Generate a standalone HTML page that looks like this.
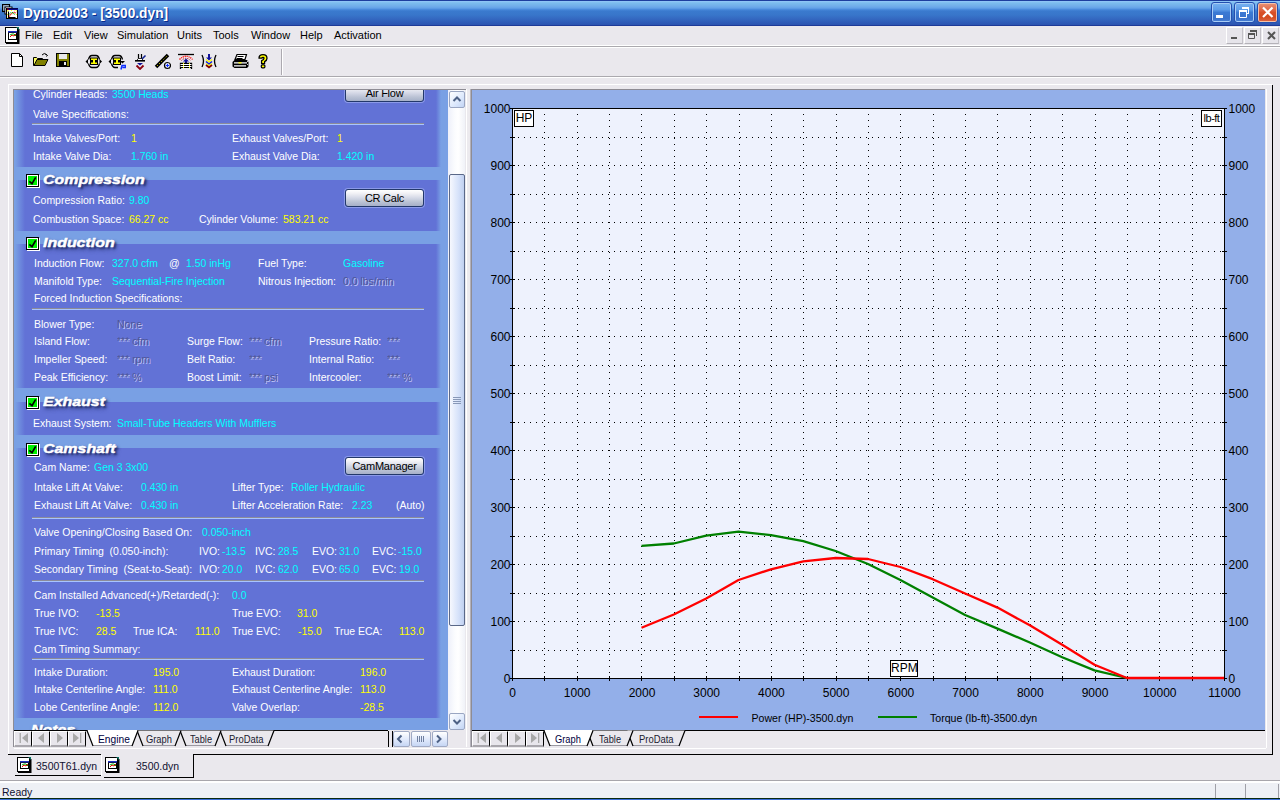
<!DOCTYPE html><html><head><meta charset="utf-8"><style>
*{margin:0;padding:0;box-sizing:border-box}
html,body{width:1280px;height:800px;overflow:hidden;background:#EAE8ED;font-family:"Liberation Sans",sans-serif}
.a{position:absolute}
.t{position:absolute;white-space:pre;font-size:11px;line-height:13px}
.p{font-size:11.5px;transform:scaleX(.91);transform-origin:0 0}
.w{color:#fff} .c{color:#00FFFF} .y{color:#FFFF00} .k{color:#000}
.d{color:#4E5598;text-shadow:1px 1px 0 #C4C8F6}
.hdr{position:absolute;white-space:pre;font:italic bold 13.5px/18px "Liberation Sans",sans-serif;color:#fff;-webkit-text-stroke:0.45px #fff;text-shadow:2px 2px 2px rgba(20,30,80,.8),1px 3px 4px rgba(20,30,80,.5);transform:scaleX(1.18);transform-origin:0 0}
.btn{position:absolute;border:1px solid #23386A;border-radius:3px;box-shadow:0 0 0 1px rgba(190,205,255,.45);background:linear-gradient(#FFFFFF 0%,#F2F2F6 20%,#D4D8E6 50%,#BAC2D4 75%,#A6B0C8 100%);font-size:11px;letter-spacing:-0.25px;line-height:16px;text-align:center;color:#000}
.cb{position:absolute;width:13px;height:13px;border:1px solid #000;background:#00F000;box-shadow:1px 1px 0 #fff, inset 0 0 0 1px #fff}
.sep{position:absolute;height:2px;border-top:1px solid #8C8C98;border-bottom:1px solid #A8C4FF}
</style></head><body>
<div class="a" style="left:0px;top:0px;width:1280px;height:26px;background:linear-gradient(#1E3E9E 0px,#1E3E9E 1px,#94C8F8 1px,#7CBCEE 3px,#72AEEA 6px,#64A2E8 8px,#4A8ADC 9.5px,#3A7ACE 11px,#3876CA 15px,#3468C0 19px,#2E5AB6 23px,#2C54B0 25px,#1E3A98 25px)"></div>
<svg class="a" style="left:2px;top:4px" width="17" height="16" viewBox="0 0 17 16">
<rect x="0.5" y="0.5" width="7" height="7" fill="none" stroke="#000" stroke-width="1.2"/><path d="M1.8 6.5V1.8H6.5" fill="none" stroke="#B8B0B0"/>
<rect x="2.5" y="2.5" width="8" height="8" fill="#000"/><path d="M3.8 9.5V3.8H9.5" fill="none" stroke="#E0DCD8"/>
<rect x="4" y="4" width="12" height="11" fill="#000"/><rect x="5" y="6" width="10" height="8" fill="#fff"/>
<rect x="5" y="4.5" width="11" height="1.5" fill="#0A0A90"/><rect x="5" y="4.5" width="1.5" height="1.5" fill="#900"/>
<path d="M5.5 6.5h9.5M5.5 13.5h9.5M5.5 6.5v7M14.5 6.5v7" stroke="#ffff00" stroke-width="0.9" stroke-dasharray="1 2.5"/>
<path d="M6.5 7.5v6h7" fill="none" stroke="#000" stroke-width="1.1"/>
<path d="M7.3 12.5L9 10.3 10.5 9.2 11.5 8.3 13.3 8.3 14.2 9.5" fill="none" stroke="#f00" stroke-width="1.1" stroke-dasharray="1 0.6"/>
<path d="M7.5 10.3L8.8 8.8 10.5 8.6 12 9.6 12.8 10.8" fill="none" stroke="#0A0" stroke-width="1.1" stroke-dasharray="1 0.6"/>
</svg>
<span class="a" style="left:23px;top:4px;font:bold 14.4px/18px 'Liberation Sans',sans-serif;color:#fff;text-shadow:1px 1px 0 #0A2A8C;white-space:pre;transform:scaleX(.955);transform-origin:0 0">Dyno2003 - [3500.dyn]</span>
<div class="a" style="left:1211px;top:2px;width:21px;height:21px;border:1px solid #2450B0;border-radius:3px;background:linear-gradient(#7AB4F0,#5E9CE8 35%,#3C7AD4 50%,#3A72CC 80%,#4A80D4);box-shadow:inset 0 0 0 1px #A8CCF6"></div>
<div class="a" style="left:1234px;top:2px;width:21px;height:21px;border:1px solid #2450B0;border-radius:3px;background:linear-gradient(#7AB4F0,#5E9CE8 35%,#3C7AD4 50%,#3A72CC 80%,#4A80D4);box-shadow:inset 0 0 0 1px #A8CCF6"></div>
<div class="a" style="left:1257px;top:2px;width:21px;height:21px;border:1px solid #2450B0;border-radius:3px;background:linear-gradient(#E89478,#E07050 30%,#D85028 50%,#D44C20 75%,#DC6848);box-shadow:inset 0 0 0 1px #F4C0A8"></div>
<div class="a" style="left:1216px;top:15px;width:7px;height:3px;background:#fff"></div>
<svg class="a" style="left:1234px;top:0px" width="21" height="24"><path d="M5.5 11v6.5h7v-6.5z" fill="none" stroke="#fff" stroke-width="1"/><rect x="5" y="10" width="8" height="2" fill="#fff"/><rect x="8" y="7" width="7" height="2" fill="#fff"/><rect x="14" y="7" width="1" height="7" fill="#fff"/><rect x="13" y="13" width="2" height="1" fill="#fff"/></svg>
<svg class="a" style="left:1257px;top:0px" width="21" height="24"><path d="M6 7.5l9.5 9.5M15.5 7.5l-9.5 9.5" stroke="#fff" stroke-width="2.2"/></svg>
<svg class="a" style="left:5px;top:27px" width="15" height="17" viewBox="0 0 15 17">
<rect x="0.5" y="0.5" width="12" height="15" fill="#fff" stroke="#000"/>
<rect x="1" y="15" width="13" height="2" fill="#000"/><rect x="13" y="2" width="1.5" height="15" fill="#000"/>
<path d="M11 0h3v3z" fill="#0a7060"/>
<rect x="3" y="4" width="9" height="9" fill="#000"/><rect x="4" y="6" width="7" height="6" fill="#fff"/><rect x="3" y="4" width="9" height="1.5" fill="#2030c0"/>
<polyline points="5,10 7,8 9,9 11,7" fill="none" stroke="#e00"/><polyline points="5,8 7,7 9,7 11,9" fill="none" stroke="#0a0"/>
</svg>
<span class="t k" style="left:25px;top:28.9px;">File</span>
<span class="t k" style="left:53px;top:28.9px;">Edit</span>
<span class="t k" style="left:84px;top:28.9px;">View</span>
<span class="t k" style="left:117px;top:28.9px;">Simulation</span>
<span class="t k" style="left:177px;top:28.9px;">Units</span>
<span class="t k" style="left:213px;top:28.9px;">Tools</span>
<span class="t k" style="left:251px;top:28.9px;">Window</span>
<span class="t k" style="left:300px;top:28.9px;">Help</span>
<span class="t k" style="left:334px;top:28.9px;">Activation</span>
<div class="a" style="left:1226px;top:27px;width:17px;height:17px;background:#E6E4EA;border-left:1px solid #fff;border-top:1px solid #fff;border-right:1px solid #C4C2C8;border-bottom:1px solid #B4B2B8"></div>
<div class="a" style="left:1244px;top:27px;width:17px;height:17px;background:#E6E4EA;border-left:1px solid #fff;border-top:1px solid #fff;border-right:1px solid #C4C2C8;border-bottom:1px solid #B4B2B8"></div>
<div class="a" style="left:1262px;top:27px;width:17px;height:17px;background:#E6E4EA;border-left:1px solid #fff;border-top:1px solid #fff;border-right:1px solid #C4C2C8;border-bottom:1px solid #B4B2B8"></div>
<div class="a" style="left:1231px;top:37px;width:6px;height:2px;background:#555"></div>
<svg class="a" style="left:1244px;top:27px" width="17" height="17"><path d="M4.5 7v4.5h6V7" fill="none" stroke="#555" stroke-width="1"/><rect x="4" y="6" width="7" height="2" fill="#555"/><rect x="6" y="3" width="7" height="2" fill="#555"/><rect x="12" y="3" width="1" height="6" fill="#555"/></svg>
<svg class="a" style="left:1267px;top:31px" width="9" height="9"><path d="M1 1l7 7M8 1l-7 7" stroke="#555" stroke-width="2"/></svg>
<div class="a" style="left:0px;top:45px;width:1280px;height:1px;background:#fff"></div>
<div class="a" style="left:0px;top:46px;width:1280px;height:1px;background:#ABA9AE"></div>
<div class="a" style="left:0px;top:47px;width:1280px;height:1px;background:#fff"></div>

<svg class="a" style="left:10px;top:52px" width="14" height="16"><path d="M1.5 1.5h8l3 3v10h-11z" fill="#fff" stroke="#000"/><path d="M9.5 1.5v3h3" fill="none" stroke="#000"/></svg>
<svg class="a" style="left:32px;top:52px" width="17" height="15"><path d="M1.5 5.5h3l1 1h5v7h-9z" fill="#ffff60" stroke="#000"/><path d="M2 13.5l3-6h11l-3 6z" fill="#808000" stroke="#000"/><path d="M10 3q2-3 5 0" fill="none" stroke="#000"/><path d="M13.5 2l2 1.5-1 1" fill="none" stroke="#000"/></svg>
<svg class="a" style="left:56px;top:53px" width="14" height="14"><rect x="0.5" y="0.5" width="13" height="13" fill="#808000" stroke="#000"/><rect x="3" y="1" width="8" height="5" fill="#e8e8e8"/><rect x="3" y="8" width="8" height="6" fill="#000"/><rect x="8" y="9" width="2" height="3" fill="#e8e8e8"/></svg>
<svg class="a" style="left:85px;top:54px" width="18" height="15"><path d="M3.5 5.5Q4.5 1.5 7 1.5H11Q13.5 1.5 14.5 5.5M3.5 9.5Q4.5 13.5 7 13.5H11Q13.5 13.5 14.5 9.5" fill="none" stroke="#000" stroke-width="1.3"/><path d="M0.5 7.5l2.5-2.5v5z M17 7.5l-2.5-2.5v5z" fill="#000"/><rect x="5" y="3.5" width="8" height="7.5" fill="#000"/><path d="M6 4.5h6v1.6h-2v2.3h2v1.6h-6v-1.6h2v-2.3h-2z" fill="#ffff00"/></svg>
<svg class="a" style="left:108px;top:54px" width="18" height="16"><path d="M3.5 5.5Q4.5 1.5 7 1.5H11Q13.5 1.5 14.5 5.5M3.5 9.5Q4.5 13.5 7 13.5H10" fill="none" stroke="#000" stroke-width="1.3"/><path d="M0.5 7.5l2.5-2.5v5z M14.5 9.5l-2.5-2.5h5z" fill="#000"/><rect x="5" y="3.5" width="8" height="7.5" fill="#000"/><path d="M6 4.5h6v1.6h-2v2.3h2v1.6h-6v-1.6h2v-2.3h-2z" fill="#ffff00"/><path d="M13 15.5l1-4h3.5v2h-3" fill="none" stroke="#1030ff" stroke-width="1.5"/></svg>
<svg class="a" style="left:134px;top:53px" width="13" height="17"><path d="M4.5 1v6M7.5 1v6" stroke="#000" stroke-width="1.2"/><path d="M7.5 6.5l4-4" stroke="#102090" stroke-width="1.6"/><path d="M1 7.8h10" stroke="#000" stroke-width="1.6"/><path d="M3 7l1.5-1.5h3L9 7" fill="#fff" stroke="#000" stroke-width="0.8"/><path d="M3 10h6l-3 2.5z" fill="#10109a"/><path d="M2.5 12.5l3.5 3.5 3.5-3.5" fill="none" stroke="#8a0010" stroke-width="1.8"/></svg>
<svg class="a" style="left:154px;top:53px" width="17" height="17"><path d="M2 14L14 2" stroke="#000" stroke-width="3.6"/><path d="M3 13L13 3" stroke="#ffff00" stroke-width="1" stroke-dasharray="1 2.1"/><circle cx="13.5" cy="12.5" r="3" fill="#fff" stroke="#000" stroke-width="1.2"/><path d="M13.5 10.7v3.6M11.7 12.5h3.6" stroke="#1030ff" stroke-width="1.2"/></svg>
<svg class="a" style="left:177px;top:53px" width="18" height="17"><path d="M1 1.5h16" stroke="#000" stroke-width="1.3"/><path d="M2.5 6.5Q9 0 15.5 6.5" fill="none" stroke="#f00" stroke-width="1.3" stroke-dasharray="1.2 0.8"/><path d="M4.5 7.5Q9 3 13.5 7.5" fill="none" stroke="#a00" stroke-width="1" stroke-dasharray="1 1"/><path d="M9 5.5l-3 3h6z" fill="#10109a"/><path d="M9 8v2" stroke="#10109a" stroke-width="2"/><path d="M3.5 16V10.5h11V16" fill="none" stroke="#000" stroke-width="1.3"/><path d="M3.5 10.5h11M3.5 12.5h11M3.5 14.5h11" stroke="#000" stroke-width="1"/><path d="M3.5 11.5h11M3.5 13.5h11" stroke="#fff" stroke-width="1"/><path d="M6.5 10v6M12.5 10v6" stroke="#ffff00" stroke-width="1" stroke-dasharray="1 1"/></svg>
<svg class="a" style="left:201px;top:53px" width="16" height="16"><path d="M1 2q3 6 0 12M15 2q-3 6 0 12" fill="none" stroke="#000" stroke-width="1.3"/><path d="M8 1v4" stroke="#10109a" stroke-width="2"/><path d="M5 4.5h6l-3 3z" fill="#10109a"/><path d="M5 6.5l3 2.5 3-2.5" fill="none" stroke="#ffff00" stroke-width="1.3"/><path d="M5 8.5l3 2.5 3-2.5" fill="none" stroke="#1020e0" stroke-width="1.6"/><path d="M5 10.5l3 2.5 3-2.5" fill="none" stroke="#ffff00" stroke-width="1.3"/><path d="M5 12l3 2.5 3-2.5" fill="none" stroke="#800000" stroke-width="1.7"/></svg>
<svg class="a" style="left:231px;top:53px" width="18" height="16"><path d="M6 1.5h9.5l-1.5 5h-10z" fill="#fff" stroke="#000" stroke-width="1.2"/><path d="M6.5 3.5h6M5.5 5.5h6" stroke="#000" stroke-width="1"/><path d="M3.5 7h12.5l1.5 2v4.5l-1.5 1.5h-12.5l-2-1.5v-4.5z" fill="#000"/><path d="M3 9.8h13M3 12.8h12" stroke="#fff" stroke-width="1.3"/><path d="M7.5 9.8h3" stroke="#ffff00" stroke-width="1.3"/><path d="M16 8l1 1M16 11l1 1" stroke="#fff" stroke-width="0.8"/></svg>
<svg class="a" style="left:257px;top:53px" width="12" height="16"><path d="M2 5.2Q2 1.6 6 1.6T10 5.2Q10 7.4 7.6 8.6V10.6H4.6V7.6Q7 6.6 7 5.2 7 4.4 6 4.4T5 5.2z" fill="#ffff00" stroke="#000" stroke-width="1.3" stroke-linejoin="round"/><rect x="4.3" y="11.8" width="3.6" height="3" rx="1" fill="#ffff00" stroke="#000" stroke-width="1.2"/></svg>

<div class="a" style="left:281px;top:49px;width:1px;height:26px;background:#ACA9B0"></div>
<div class="a" style="left:282px;top:49px;width:1px;height:26px;background:#fff"></div>
<div class="a" style="left:0px;top:76px;width:1280px;height:1px;background:#ABA9AE"></div>
<div class="a" style="left:0px;top:77px;width:1280px;height:1px;background:#fff"></div>
<div class="a" style="left:8px;top:84px;width:1264px;height:1px;background:#fff"></div>
<div class="a" style="left:8px;top:84px;width:1px;height:670px;background:#fff"></div>
<div class="a" style="left:1272px;top:85px;width:1px;height:670px;background:#000"></div>
<div class="a" style="left:13px;top:89px;width:453px;height:1px;background:#8E8C94"></div>
<div class="a" style="left:13px;top:89px;width:1px;height:658px;background:#8E8C94"></div>
<div class="a" style="left:471px;top:89px;width:794px;height:1px;background:#8E8C94"></div>
<div class="a" style="left:471px;top:89px;width:1px;height:658px;background:#8E8C94"></div>
<div class="a" style="left:466px;top:89px;width:1px;height:658px;background:#FFFFFF"></div>
<div class="a" style="left:467px;top:89px;width:3px;height:658px;background:#ECEAEE"></div>
<div class="a" style="left:470px;top:89px;width:1px;height:658px;background:#B4B2BA"></div>
<div class="a" style="left:1266px;top:89px;width:1px;height:659px;background:#fff"></div>
<div class="a" style="left:14px;top:748px;width:1252px;height:1px;background:#fff"></div>
<div class="a" style="left:14px;top:90px;width:434px;height:640px;overflow:hidden;background:#79A0E4">
<div class="a" style="left:0px;top:-30px;width:434px;height:107px;background:linear-gradient(to right,#79A0E4 1px,#6272D6 11px,#6272D6 422px,#79A0E4 427px,#79A0E4 434px)"></div>
<div class="a" style="left:0px;top:90px;width:434px;height:51px;background:linear-gradient(to right,#79A0E4 1px,#6272D6 11px,#6272D6 422px,#79A0E4 427px,#79A0E4 434px)"></div>
<div class="a" style="left:0px;top:154px;width:434px;height:144px;background:linear-gradient(to right,#79A0E4 1px,#6272D6 11px,#6272D6 422px,#79A0E4 427px,#79A0E4 434px)"></div>
<div class="a" style="left:0px;top:312px;width:434px;height:33px;background:linear-gradient(to right,#79A0E4 1px,#6272D6 11px,#6272D6 422px,#79A0E4 427px,#79A0E4 434px)"></div>
<div class="a" style="left:0px;top:358px;width:434px;height:270px;background:linear-gradient(to right,#79A0E4 1px,#6272D6 11px,#6272D6 422px,#79A0E4 427px,#79A0E4 434px)"></div>
</div>
<div class="a" style="left:0;top:90px;width:448px;height:640px;overflow:hidden">
<span class="t p w" style="left:33px;top:-2.5px">Cylinder Heads:</span>
<span class="t p c" style="left:112px;top:-2.5px">3500 Heads</span>
<div class="btn" style="left:345px;top:-6px;width:79px;height:18px;line-height:16px">Air Flow</div>
<span class="t p w" style="left:33px;top:17.5px">Valve Specifications:</span>
<div class="sep" style="left:32px;top:33px;width:392px"></div>
<span class="t p w" style="left:33px;top:41.5px">Intake Valves/Port:</span>
<span class="t p y" style="left:131px;top:41.5px">1</span>
<span class="t p w" style="left:232px;top:41.5px">Exhaust Valves/Port:</span>
<span class="t p y" style="left:337px;top:41.5px">1</span>
<span class="t p w" style="left:33px;top:59.5px">Intake Valve Dia:</span>
<span class="t p c" style="left:131px;top:59.5px">1.760 in</span>
<span class="t p w" style="left:232px;top:59.5px">Exhaust Valve Dia:</span>
<span class="t p c" style="left:337px;top:59.5px">1.420 in</span>
<div class="cb" style="left:26px;top:84px"></div>
<svg class="a" style="left:26px;top:84px" width="13" height="13"><path d="M3.3 7.3L6 9.6 9.7 3.4" fill="none" stroke="#000" stroke-width="1.7"/></svg>
<span class="hdr" style="left:43px;top:80.7px">Compression</span>
<div class="btn" style="left:345px;top:99px;width:79px;height:18px;line-height:16px">CR Calc</div>
<span class="t p w" style="left:33px;top:103.5px">Compression Ratio:</span>
<span class="t p c" style="left:129px;top:103.5px">9.80</span>
<span class="t p w" style="left:33px;top:122.5px">Combustion Space:</span>
<span class="t p y" style="left:129px;top:122.5px">66.27 cc</span>
<span class="t p w" style="left:199px;top:122.5px">Cylinder Volume:</span>
<span class="t p y" style="left:283px;top:122.5px">583.21 cc</span>
<div class="cb" style="left:26px;top:147px"></div>
<svg class="a" style="left:26px;top:147px" width="13" height="13"><path d="M3.3 7.3L6 9.6 9.7 3.4" fill="none" stroke="#000" stroke-width="1.7"/></svg>
<span class="hdr" style="left:43px;top:143.7px">Induction</span>
<span class="t p w" style="left:33.5px;top:166.5px">Induction Flow:</span>
<span class="t p c" style="left:112px;top:166.5px">327.0 cfm</span>
<span class="t p w" style="left:168.5px;top:166.5px">@</span>
<span class="t p c" style="left:186px;top:166.5px">1.50 inHg</span>
<span class="t p w" style="left:257.5px;top:166.5px">Fuel Type:</span>
<span class="t p c" style="left:342.5px;top:166.5px">Gasoline</span>
<span class="t p w" style="left:33.5px;top:184.5px">Manifold Type:</span>
<span class="t p c" style="left:112px;top:184.5px">Sequential-Fire Injection</span>
<span class="t p w" style="left:257.5px;top:184.5px">Nitrous Injection:</span>
<span class="t p d" style="left:343px;top:184.5px">0.0 lbs/min</span>
<span class="t p w" style="left:33.5px;top:201.5px">Forced Induction Specifications:</span>
<div class="sep" style="left:32px;top:218px;width:392px"></div>
<span class="t p w" style="left:33.5px;top:227.5px">Blower Type:</span>
<span class="t p d" style="left:117px;top:227.5px">None</span>
<span class="t p w" style="left:33.5px;top:244.5px">Island Flow:</span>
<span class="t p d" style="left:117px;top:244.5px">*** cfm</span>
<span class="t p w" style="left:186.5px;top:244.5px">Surge Flow:</span>
<span class="t p d" style="left:249px;top:244.5px">*** cfm</span>
<span class="t p w" style="left:308.5px;top:244.5px">Pressure Ratio:</span>
<span class="t p d" style="left:387px;top:244.5px">***</span>
<span class="t p w" style="left:33.5px;top:262.5px">Impeller Speed:</span>
<span class="t p d" style="left:117px;top:262.5px">*** rpm</span>
<span class="t p w" style="left:186.5px;top:262.5px">Belt Ratio:</span>
<span class="t p d" style="left:249px;top:262.5px">***</span>
<span class="t p w" style="left:308.5px;top:262.5px">Internal Ratio:</span>
<span class="t p d" style="left:387px;top:262.5px">***</span>
<span class="t p w" style="left:33.5px;top:280.5px">Peak Efficiency:</span>
<span class="t p d" style="left:117px;top:280.5px">*** %</span>
<span class="t p w" style="left:186.5px;top:280.5px">Boost Limit:</span>
<span class="t p d" style="left:249px;top:280.5px">*** psi</span>
<span class="t p w" style="left:308.5px;top:280.5px">Intercooler:</span>
<span class="t p d" style="left:387px;top:280.5px">*** %</span>
<div class="cb" style="left:26px;top:306px"></div>
<svg class="a" style="left:26px;top:306px" width="13" height="13"><path d="M3.3 7.3L6 9.6 9.7 3.4" fill="none" stroke="#000" stroke-width="1.7"/></svg>
<span class="hdr" style="left:43px;top:302.7px">Exhaust</span>
<span class="t p w" style="left:33px;top:326.5px">Exhaust System:</span>
<span class="t p c" style="left:116.5px;top:326.5px">Small-Tube Headers With Mufflers</span>
<div class="cb" style="left:26px;top:353px"></div>
<svg class="a" style="left:26px;top:353px" width="13" height="13"><path d="M3.3 7.3L6 9.6 9.7 3.4" fill="none" stroke="#000" stroke-width="1.7"/></svg>
<span class="hdr" style="left:43px;top:349.7px">Camshaft</span>
<div class="btn" style="left:345px;top:367px;width:79px;height:18px;line-height:16px">CamManager</div>
<span class="t p w" style="left:33.5px;top:370.5px">Cam Name:</span>
<span class="t p c" style="left:93.5px;top:370.5px">Gen 3 3x00</span>
<span class="t p w" style="left:33.5px;top:390.5px">Intake Lift At Valve:</span>
<span class="t p c" style="left:140.5px;top:390.5px">0.430 in</span>
<span class="t p w" style="left:231.5px;top:390.5px">Lifter Type:</span>
<span class="t p c" style="left:290.5px;top:390.5px">Roller Hydraulic</span>
<span class="t p w" style="left:33.5px;top:409.0px">Exhaust Lift At Valve:</span>
<span class="t p c" style="left:140.5px;top:409.0px">0.430 in</span>
<span class="t p w" style="left:231.5px;top:409.0px">Lifter Acceleration Rate:</span>
<span class="t p c" style="left:352px;top:409.0px">2.23</span>
<span class="t p w" style="left:395.5px;top:409.0px">(Auto)</span>
<div class="sep" style="left:32px;top:427px;width:392px"></div>
<span class="t p w" style="left:33.5px;top:435.5px">Valve Opening/Closing Based On:</span>
<span class="t p c" style="left:201.5px;top:435.5px">0.050-inch</span>
<span class="t p w" style="left:33.5px;top:454.5px">Primary Timing  (0.050-inch):</span>
<span class="t p w" style="left:198.5px;top:454.5px">IVO:</span>
<span class="t p c" style="left:222px;top:454.5px">-13.5</span>
<span class="t p w" style="left:255px;top:454.5px">IVC:</span>
<span class="t p c" style="left:278px;top:454.5px">28.5</span>
<span class="t p w" style="left:311.5px;top:454.5px">EVO:</span>
<span class="t p c" style="left:339px;top:454.5px">31.0</span>
<span class="t p w" style="left:372px;top:454.5px">EVC:</span>
<span class="t p c" style="left:398px;top:454.5px">-15.0</span>
<span class="t p w" style="left:33.5px;top:472.5px">Secondary Timing  (Seat-to-Seat):</span>
<span class="t p w" style="left:198.5px;top:472.5px">IVO:</span>
<span class="t p c" style="left:222px;top:472.5px">20.0</span>
<span class="t p w" style="left:255px;top:472.5px">IVC:</span>
<span class="t p c" style="left:278px;top:472.5px">62.0</span>
<span class="t p w" style="left:311.5px;top:472.5px">EVO:</span>
<span class="t p c" style="left:339px;top:472.5px">65.0</span>
<span class="t p w" style="left:372px;top:472.5px">EVC:</span>
<span class="t p c" style="left:398.5px;top:472.5px">19.0</span>
<div class="sep" style="left:32px;top:490px;width:392px"></div>
<span class="t p w" style="left:33.5px;top:498.5px">Cam Installed Advanced(+)/Retarded(-):</span>
<span class="t p c" style="left:231.5px;top:498.5px">0.0</span>
<span class="t p w" style="left:33.5px;top:516.5px">True IVO:</span>
<span class="t p y" style="left:95.5px;top:516.5px">-13.5</span>
<span class="t p w" style="left:231.5px;top:516.5px">True EVO:</span>
<span class="t p y" style="left:297px;top:516.5px">31.0</span>
<span class="t p w" style="left:33.5px;top:534.5px">True IVC:</span>
<span class="t p y" style="left:95.5px;top:534.5px">28.5</span>
<span class="t p w" style="left:133px;top:534.5px">True ICA:</span>
<span class="t p y" style="left:194.5px;top:534.5px">111.0</span>
<span class="t p w" style="left:231.5px;top:534.5px">True EVC:</span>
<span class="t p y" style="left:297.5px;top:534.5px">-15.0</span>
<span class="t p w" style="left:333.5px;top:534.5px">True ECA:</span>
<span class="t p y" style="left:398.5px;top:534.5px">113.0</span>
<span class="t p w" style="left:33.5px;top:552.5px">Cam Timing Summary:</span>
<div class="sep" style="left:32px;top:568px;width:392px"></div>
<span class="t p w" style="left:33.5px;top:575.5px">Intake Duration:</span>
<span class="t p y" style="left:153px;top:575.5px">195.0</span>
<span class="t p w" style="left:231.5px;top:575.5px">Exhaust Duration:</span>
<span class="t p y" style="left:360px;top:575.5px">196.0</span>
<span class="t p w" style="left:33.5px;top:592.5px">Intake Centerline Angle:</span>
<span class="t p y" style="left:153px;top:592.5px">111.0</span>
<span class="t p w" style="left:231.5px;top:592.5px">Exhaust Centerline Angle:</span>
<span class="t p y" style="left:360px;top:592.5px">113.0</span>
<span class="t p w" style="left:33.5px;top:610.5px">Lobe Centerline Angle:</span>
<span class="t p y" style="left:153px;top:610.5px">112.0</span>
<span class="t p w" style="left:231.5px;top:610.5px">Valve Overlap:</span>
<span class="t p y" style="left:360px;top:610.5px">-28.5</span>
<span class="hdr" style="left:31px;top:631.4px">Notes</span>
</div>
<div class="a" style="left:448px;top:90px;width:17px;height:640px;background:linear-gradient(to right,#EEF0FA,#FBFCFE 40%,#FFFFFF 60%,#F0F2F8)"></div>
<div class="a" style="left:449px;top:91px;width:16px;height:17px;border:1px solid #9AA6C2;border-radius:2px;background:linear-gradient(135deg,#FFFFFF,#DCE8FC 60%,#C2D4F4)"></div>
<svg class="a" style="left:452px;top:95px" width="10" height="8"><path d="M1.5 6l3.5-3.5 3.5 3.5" fill="none" stroke="#4D6185" stroke-width="2"/></svg>
<div class="a" style="left:449px;top:713px;width:16px;height:17px;border:1px solid #9AA6C2;border-radius:2px;background:linear-gradient(135deg,#FFFFFF,#DCE8FC 60%,#C2D4F4)"></div>
<svg class="a" style="left:452px;top:718px" width="10" height="8"><path d="M1.5 2l3.5 3.5 3.5-3.5" fill="none" stroke="#4D6185" stroke-width="2"/></svg>
<div class="a" style="left:449px;top:174px;width:16px;height:452px;border:1px solid #5A6888;border-radius:2px;background:linear-gradient(to right,#F6F8FE,#D6E2FA 60%,#C0D0F0)"></div>
<svg class="a" style="left:453px;top:396px" width="8" height="8"><path d="M0 1.5h8M0 3.5h8M0 5.5h8M0 7.5h8" stroke="#8898B8"/></svg>
<div class="a" style="left:14px;top:730px;width:452px;height:17px;background:#EAE8ED"></div>
<div class="a" style="left:14px;top:730px;width:74px;height:1px;background:#000"></div>
<div class="a" style="left:14px;top:731px;width:18px;height:16px;background:#E8E6EC;border-left:1px solid #fff;border-top:1px solid #fff;border-right:1px solid #000;border-bottom:2px solid #A9A7AD"></div>
<div class="a" style="left:32px;top:731px;width:18px;height:16px;background:#E8E6EC;border-left:1px solid #fff;border-top:1px solid #fff;border-right:1px solid #000;border-bottom:2px solid #A9A7AD"></div>
<div class="a" style="left:50px;top:731px;width:18px;height:16px;background:#E8E6EC;border-left:1px solid #fff;border-top:1px solid #fff;border-right:1px solid #000;border-bottom:2px solid #A9A7AD"></div>
<div class="a" style="left:68px;top:731px;width:18px;height:16px;background:#E8E6EC;border-left:1px solid #fff;border-top:1px solid #fff;border-right:1px solid #000;border-bottom:2px solid #A9A7AD"></div>
<svg class="a" style="left:14px;top:731px" width="74" height="16">
<rect x="5.6" y="2" width="1.3" height="10" fill="#A8A8A8"/><path d="M14 2v10l-6-5z" fill="#A8A8A8"/>
<path d="M30 2v10l-6-5z" fill="#A8A8A8"/>
<path d="M43 2v10l6-5z" fill="#A8A8A8"/>
<path d="M59 2v10l6-5z" fill="#A8A8A8"/><rect x="66" y="2" width="1.3" height="10" fill="#A8A8A8"/>
</svg>
<svg class="a" style="left:0;top:730px" width="1280" height="17"><rect x="87" y="0" width="301" height="17" fill="#EAE8ED"/><path d="M87 0.5H388" stroke="#000"/><path d="M220 0.5L226 16H268L274 0.5" fill="#EAE8ED"/><path d="M226 15.5H268" stroke="#9A98A0" stroke-width="1"/><path d="M220 0.5L226 16M268 16L274 0.5" fill="none" stroke="#000" stroke-width="1.2"/><path d="M180 0.5L186 16H215L221 0.5" fill="#EAE8ED"/><path d="M186 15.5H215" stroke="#9A98A0" stroke-width="1"/><path d="M180 0.5L186 16M215 16L221 0.5" fill="none" stroke="#000" stroke-width="1.2"/><path d="M137 0.5L143 16H175L181 0.5" fill="#EAE8ED"/><path d="M143 15.5H175" stroke="#9A98A0" stroke-width="1"/><path d="M137 0.5L143 16M175 16L181 0.5" fill="none" stroke="#000" stroke-width="1.2"/><path d="M87 0.5L93 16H132L138 0.5" fill="#FFFFFF"/><path d="M93 15.5H132" stroke="#9A98A0" stroke-width="1"/><path d="M87 0.5L93 16M132 16L138 0.5" fill="none" stroke="#000" stroke-width="1.2"/><rect x="88" y="0" width="49" height="1.2" fill="#fff"/></svg>
<span class="t" style="left:97.5px;top:732.5px;color:#000040;font-size:11.5px;transform:scaleX(0.89);transform-origin:0 0">Engine</span>
<span class="t" style="left:145.5px;top:732.5px;color:#202030;font-size:11.5px;transform:scaleX(0.81);transform-origin:0 0">Graph</span>
<span class="t" style="left:189.5px;top:732.5px;color:#202030;font-size:11.5px;transform:scaleX(0.8);transform-origin:0 0">Table</span>
<span class="t" style="left:229px;top:732.5px;color:#202030;font-size:11.5px;transform:scaleX(0.82);transform-origin:0 0">ProData</span>
<div class="a" style="left:388px;top:731px;width:1px;height:16px;background:#000"></div>
<div class="a" style="left:392px;top:731px;width:1px;height:16px;background:#000"></div>
<div class="a" style="left:393px;top:731px;width:17px;height:16px;border:1px solid #A0AAC4;border-radius:2px;background:linear-gradient(#FFFFFF,#DDE7FB 60%,#C6D6F4)"></div>
<div class="a" style="left:411px;top:731px;width:20px;height:16px;border:1px solid #A0AAC4;border-radius:2px;background:linear-gradient(#FFFFFF,#DDE7FB 60%,#C6D6F4)"></div>
<div class="a" style="left:432px;top:731px;width:16px;height:16px;border:1px solid #A0AAC4;border-radius:2px;background:linear-gradient(#FFFFFF,#DDE7FB 60%,#C6D6F4)"></div>
<svg class="a" style="left:393px;top:731px" width="56" height="16"><path d="M8.5 4.5l-3.5 3.5 3.5 3.5" fill="none" stroke="#4D6185" stroke-width="2"/><path d="M24.5 5v6M26.5 5v6M28.5 5v6M30.5 5v6" stroke="#7080A0"/><path d="M44 4.5l3.5 3.5-3.5 3.5" fill="none" stroke="#4D6185" stroke-width="2"/></svg>
<div class="a" style="left:472px;top:730px;width:793px;height:17px;background:#EAE8ED"></div>
<div class="a" style="left:472px;top:730px;width:74px;height:1px;background:#000"></div>
<div class="a" style="left:472px;top:731px;width:18px;height:16px;background:#E8E6EC;border-left:1px solid #fff;border-top:1px solid #fff;border-right:1px solid #000;border-bottom:2px solid #A9A7AD"></div>
<div class="a" style="left:490px;top:731px;width:18px;height:16px;background:#E8E6EC;border-left:1px solid #fff;border-top:1px solid #fff;border-right:1px solid #000;border-bottom:2px solid #A9A7AD"></div>
<div class="a" style="left:508px;top:731px;width:18px;height:16px;background:#E8E6EC;border-left:1px solid #fff;border-top:1px solid #fff;border-right:1px solid #000;border-bottom:2px solid #A9A7AD"></div>
<div class="a" style="left:526px;top:731px;width:18px;height:16px;background:#E8E6EC;border-left:1px solid #fff;border-top:1px solid #fff;border-right:1px solid #000;border-bottom:2px solid #A9A7AD"></div>
<svg class="a" style="left:472px;top:731px" width="74" height="16">
<rect x="5.6" y="2" width="1.3" height="10" fill="#A8A8A8"/><path d="M14 2v10l-6-5z" fill="#A8A8A8"/>
<path d="M30 2v10l-6-5z" fill="#A8A8A8"/>
<path d="M43 2v10l6-5z" fill="#A8A8A8"/>
<path d="M59 2v10l6-5z" fill="#A8A8A8"/><rect x="66" y="2" width="1.3" height="10" fill="#A8A8A8"/>
</svg>
<svg class="a" style="left:0;top:730px" width="1280" height="17"><rect x="544" y="0" width="721" height="17" fill="#EAE8ED"/><path d="M544 0.5H1265" stroke="#000"/><path d="M627 0.5L633 16H679L685 0.5" fill="#EAE8ED"/><path d="M633 15.5H679" stroke="#9A98A0" stroke-width="1"/><path d="M627 0.5L633 16M679 16L685 0.5" fill="none" stroke="#000" stroke-width="1.2"/><path d="M587 0.5L593 16H627L633 0.5" fill="#EAE8ED"/><path d="M593 15.5H627" stroke="#9A98A0" stroke-width="1"/><path d="M587 0.5L593 16M627 16L633 0.5" fill="none" stroke="#000" stroke-width="1.2"/><path d="M544 0.5L550 16H587L593 0.5" fill="#FFFFFF"/><path d="M550 15.5H587" stroke="#9A98A0" stroke-width="1"/><path d="M544 0.5L550 16M587 16L593 0.5" fill="none" stroke="#000" stroke-width="1.2"/><rect x="545" y="0" width="47" height="1.2" fill="#fff"/></svg>
<span class="t" style="left:555px;top:732.5px;color:#000040;font-size:11.5px;transform:scaleX(0.81);transform-origin:0 0">Graph</span>
<span class="t" style="left:599px;top:732.5px;color:#202030;font-size:11.5px;transform:scaleX(0.8);transform-origin:0 0">Table</span>
<span class="t" style="left:639px;top:732.5px;color:#202030;font-size:11.5px;transform:scaleX(0.82);transform-origin:0 0">ProData</span>
<svg class="a" style="left:472px;top:90px" width="793" height="640" viewBox="472 90 793 640" shape-rendering="crispEdges"><rect x="472" y="90" width="793" height="640" fill="#93AFE9"/><rect x="512" y="108" width="712" height="570" fill="#EEF2FD"/><path d="M518 650.5H1224" stroke="#000" stroke-dasharray="1 5"/><path d="M518 621.5H1224" stroke="#000" stroke-dasharray="1 5"/><path d="M518 593.5H1224" stroke="#000" stroke-dasharray="1 5"/><path d="M518 564.5H1224" stroke="#000" stroke-dasharray="1 5"/><path d="M518 536.5H1224" stroke="#000" stroke-dasharray="1 5"/><path d="M518 507.5H1224" stroke="#000" stroke-dasharray="1 5"/><path d="M518 479.5H1224" stroke="#000" stroke-dasharray="1 5"/><path d="M518 450.5H1224" stroke="#000" stroke-dasharray="1 5"/><path d="M518 422.5H1224" stroke="#000" stroke-dasharray="1 5"/><path d="M518 393.5H1224" stroke="#000" stroke-dasharray="1 5"/><path d="M518 365.5H1224" stroke="#000" stroke-dasharray="1 5"/><path d="M518 336.5H1224" stroke="#000" stroke-dasharray="1 5"/><path d="M518 308.5H1224" stroke="#000" stroke-dasharray="1 5"/><path d="M518 279.5H1224" stroke="#000" stroke-dasharray="1 5"/><path d="M518 251.5H1224" stroke="#000" stroke-dasharray="1 5"/><path d="M518 222.5H1224" stroke="#000" stroke-dasharray="1 5"/><path d="M518 194.5H1224" stroke="#000" stroke-dasharray="1 5"/><path d="M518 165.5H1224" stroke="#000" stroke-dasharray="1 5"/><path d="M518 137.5H1224" stroke="#000" stroke-dasharray="1 5"/><path d="M544.5 673V108" stroke="#000" stroke-dasharray="1 5"/><path d="M577.5 673V108" stroke="#000" stroke-dasharray="1 5"/><path d="M609.5 673V108" stroke="#000" stroke-dasharray="1 5"/><path d="M641.5 673V108" stroke="#000" stroke-dasharray="1 5"/><path d="M674.5 673V108" stroke="#000" stroke-dasharray="1 5"/><path d="M706.5 673V108" stroke="#000" stroke-dasharray="1 5"/><path d="M739.5 673V108" stroke="#000" stroke-dasharray="1 5"/><path d="M771.5 673V108" stroke="#000" stroke-dasharray="1 5"/><path d="M803.5 673V108" stroke="#000" stroke-dasharray="1 5"/><path d="M836.5 673V108" stroke="#000" stroke-dasharray="1 5"/><path d="M868.5 673V108" stroke="#000" stroke-dasharray="1 5"/><path d="M900.5 673V108" stroke="#000" stroke-dasharray="1 5"/><path d="M933.5 673V108" stroke="#000" stroke-dasharray="1 5"/><path d="M965.5 673V108" stroke="#000" stroke-dasharray="1 5"/><path d="M997.5 673V108" stroke="#000" stroke-dasharray="1 5"/><path d="M1030.5 673V108" stroke="#000" stroke-dasharray="1 5"/><path d="M1062.5 673V108" stroke="#000" stroke-dasharray="1 5"/><path d="M1095.5 673V108" stroke="#000" stroke-dasharray="1 5"/><path d="M1127.5 673V108" stroke="#000" stroke-dasharray="1 5"/><path d="M1159.5 673V108" stroke="#000" stroke-dasharray="1 5"/><path d="M1192.5 673V108" stroke="#000" stroke-dasharray="1 5"/><path d="M512 108.5H1225" stroke="#000" stroke-width="1"/><path d="M510 678.5H1227" stroke="#000" stroke-width="1"/><path d="M512.5 108V681" stroke="#000" stroke-width="1"/><path d="M1224.5 108V681" stroke="#000" stroke-width="1"/><path d="M510 678.5H515M1222 678.5H1227" stroke="#000" stroke-width="1"/><path d="M510 650.5H515M1222 650.5H1227" stroke="#000" stroke-width="1"/><path d="M510 621.5H515M1222 621.5H1227" stroke="#000" stroke-width="1"/><path d="M510 593.5H515M1222 593.5H1227" stroke="#000" stroke-width="1"/><path d="M510 564.5H515M1222 564.5H1227" stroke="#000" stroke-width="1"/><path d="M510 536.5H515M1222 536.5H1227" stroke="#000" stroke-width="1"/><path d="M510 507.5H515M1222 507.5H1227" stroke="#000" stroke-width="1"/><path d="M510 479.5H515M1222 479.5H1227" stroke="#000" stroke-width="1"/><path d="M510 450.5H515M1222 450.5H1227" stroke="#000" stroke-width="1"/><path d="M510 422.5H515M1222 422.5H1227" stroke="#000" stroke-width="1"/><path d="M510 393.5H515M1222 393.5H1227" stroke="#000" stroke-width="1"/><path d="M510 365.5H515M1222 365.5H1227" stroke="#000" stroke-width="1"/><path d="M510 336.5H515M1222 336.5H1227" stroke="#000" stroke-width="1"/><path d="M510 308.5H515M1222 308.5H1227" stroke="#000" stroke-width="1"/><path d="M510 279.5H515M1222 279.5H1227" stroke="#000" stroke-width="1"/><path d="M510 251.5H515M1222 251.5H1227" stroke="#000" stroke-width="1"/><path d="M510 222.5H515M1222 222.5H1227" stroke="#000" stroke-width="1"/><path d="M510 194.5H515M1222 194.5H1227" stroke="#000" stroke-width="1"/><path d="M510 165.5H515M1222 165.5H1227" stroke="#000" stroke-width="1"/><path d="M510 137.5H515M1222 137.5H1227" stroke="#000" stroke-width="1"/><path d="M510 108.5H515M1222 108.5H1227" stroke="#000" stroke-width="1"/><path d="M512.5 676V681" stroke="#000" stroke-width="1"/><path d="M544.5 676V681" stroke="#000" stroke-width="1"/><path d="M577.5 676V681" stroke="#000" stroke-width="1"/><path d="M609.5 676V681" stroke="#000" stroke-width="1"/><path d="M641.5 676V681" stroke="#000" stroke-width="1"/><path d="M674.5 676V681" stroke="#000" stroke-width="1"/><path d="M706.5 676V681" stroke="#000" stroke-width="1"/><path d="M739.5 676V681" stroke="#000" stroke-width="1"/><path d="M771.5 676V681" stroke="#000" stroke-width="1"/><path d="M803.5 676V681" stroke="#000" stroke-width="1"/><path d="M836.5 676V681" stroke="#000" stroke-width="1"/><path d="M868.5 676V681" stroke="#000" stroke-width="1"/><path d="M900.5 676V681" stroke="#000" stroke-width="1"/><path d="M933.5 676V681" stroke="#000" stroke-width="1"/><path d="M965.5 676V681" stroke="#000" stroke-width="1"/><path d="M997.5 676V681" stroke="#000" stroke-width="1"/><path d="M1030.5 676V681" stroke="#000" stroke-width="1"/><path d="M1062.5 676V681" stroke="#000" stroke-width="1"/><path d="M1095.5 676V681" stroke="#000" stroke-width="1"/><path d="M1127.5 676V681" stroke="#000" stroke-width="1"/><path d="M1159.5 676V681" stroke="#000" stroke-width="1"/><path d="M1192.5 676V681" stroke="#000" stroke-width="1"/><path d="M1224.5 676V681" stroke="#000" stroke-width="1"/></svg>
<span class="t k" style="left:510.5px;top:673.1px;font-size:12px;transform:translateX(-100%)">0</span>
<span class="t k" style="left:1228.5px;top:673.1px;font-size:12px">0</span>
<span class="t k" style="left:510.5px;top:616.1px;font-size:12px;transform:translateX(-100%)">100</span>
<span class="t k" style="left:1228.5px;top:616.1px;font-size:12px">100</span>
<span class="t k" style="left:510.5px;top:559.1px;font-size:12px;transform:translateX(-100%)">200</span>
<span class="t k" style="left:1228.5px;top:559.1px;font-size:12px">200</span>
<span class="t k" style="left:510.5px;top:502.1px;font-size:12px;transform:translateX(-100%)">300</span>
<span class="t k" style="left:1228.5px;top:502.1px;font-size:12px">300</span>
<span class="t k" style="left:510.5px;top:445.1px;font-size:12px;transform:translateX(-100%)">400</span>
<span class="t k" style="left:1228.5px;top:445.1px;font-size:12px">400</span>
<span class="t k" style="left:510.5px;top:388.1px;font-size:12px;transform:translateX(-100%)">500</span>
<span class="t k" style="left:1228.5px;top:388.1px;font-size:12px">500</span>
<span class="t k" style="left:510.5px;top:331.1px;font-size:12px;transform:translateX(-100%)">600</span>
<span class="t k" style="left:1228.5px;top:331.1px;font-size:12px">600</span>
<span class="t k" style="left:510.5px;top:274.1px;font-size:12px;transform:translateX(-100%)">700</span>
<span class="t k" style="left:1228.5px;top:274.1px;font-size:12px">700</span>
<span class="t k" style="left:510.5px;top:217.1px;font-size:12px;transform:translateX(-100%)">800</span>
<span class="t k" style="left:1228.5px;top:217.1px;font-size:12px">800</span>
<span class="t k" style="left:510.5px;top:160.1px;font-size:12px;transform:translateX(-100%)">900</span>
<span class="t k" style="left:1228.5px;top:160.1px;font-size:12px">900</span>
<span class="t k" style="left:510.5px;top:103.1px;font-size:12px;transform:translateX(-100%)">1000</span>
<span class="t k" style="left:1228.5px;top:103.1px;font-size:12px">1000</span>
<span class="t k" style="left:512.5px;top:687.2px;font-size:12px;transform:translateX(-50%)">0</span>
<span class="t k" style="left:577.2px;top:687.2px;font-size:12px;transform:translateX(-50%)">1000</span>
<span class="t k" style="left:642.0px;top:687.2px;font-size:12px;transform:translateX(-50%)">2000</span>
<span class="t k" style="left:706.7px;top:687.2px;font-size:12px;transform:translateX(-50%)">3000</span>
<span class="t k" style="left:771.4px;top:687.2px;font-size:12px;transform:translateX(-50%)">4000</span>
<span class="t k" style="left:836.1px;top:687.2px;font-size:12px;transform:translateX(-50%)">5000</span>
<span class="t k" style="left:900.9px;top:687.2px;font-size:12px;transform:translateX(-50%)">6000</span>
<span class="t k" style="left:965.6px;top:687.2px;font-size:12px;transform:translateX(-50%)">7000</span>
<span class="t k" style="left:1030.3px;top:687.2px;font-size:12px;transform:translateX(-50%)">8000</span>
<span class="t k" style="left:1095.0px;top:687.2px;font-size:12px;transform:translateX(-50%)">9000</span>
<span class="t k" style="left:1159.8px;top:687.2px;font-size:12px;transform:translateX(-50%)">10000</span>
<span class="t k" style="left:1224.5px;top:687.2px;font-size:12px;transform:translateX(-50%)">11000</span>
<div class="a" style="left:514px;top:110px;width:20px;height:17px;border:1px solid #000;background:#fff;font-size:12px;line-height:15px;text-align:center;color:#000">HP</div>
<div class="a" style="left:1201px;top:110px;width:21px;height:17px;border:1px solid #000;background:#fff;font-size:11px;line-height:15px;text-align:center;color:#000;letter-spacing:-0.5px">lb-ft</div>
<div class="a" style="left:890px;top:660px;width:28px;height:17px;border:1px solid #000;background:#fff;font-size:12px;line-height:15px;text-align:center;color:#000">RPM</div>
<svg class="a" style="left:0;top:0" width="1280" height="800"><polyline points="641.5,545.8 673.8,543.5 706.2,535.6 738.5,531.6 770.9,535.2 803.3,541.1 835.6,551.0 868.0,564.0 900.4,580.0 932.7,597.5 965.1,615.0 997.5,628.6 1029.8,642.5 1062.2,657.3 1094.5,670.4 1126.9,678.0" fill="none" stroke="#008000" stroke-width="2.3" stroke-linejoin="round"/><polyline points="641.5,627.7 673.8,614.5 706.2,598.5 738.5,580.0 770.9,569.3 803.3,561.4 835.6,558.0 868.0,559.0 900.4,567.0 932.7,579.2 965.1,593.5 997.5,607.6 1029.8,625.3 1062.2,644.8 1094.5,664.8 1126.9,678.0 1224.0,678" fill="none" stroke="#FF0000" stroke-width="2.3" stroke-linejoin="round"/></svg>
<div class="a" style="left:699px;top:716px;width:39px;height:2px;background:#FF0000"></div>
<span class="t k" style="left:751.5px;top:711.7px;font-size:10.6px">Power (HP)-3500.dyn</span>
<div class="a" style="left:878px;top:716px;width:39px;height:2px;background:#008000"></div>
<span class="t k" style="left:930px;top:711.7px;font-size:10.6px">Torque (lb-ft)-3500.dyn</span>
<div class="a" style="left:8px;top:754px;width:93px;height:1px;background:#000"></div>
<div class="a" style="left:194px;top:754px;width:1079px;height:1px;background:#000"></div>
<div class="a" style="left:193px;top:754px;width:1px;height:24px;background:#000"></div>
<div class="a" style="left:104px;top:777px;width:90px;height:1px;background:#000"></div>
<div class="a" style="left:15px;top:775px;width:86px;height:1px;background:#000"></div>
<div class="a" style="left:101px;top:755px;width:1px;height:21px;background:#fff"></div>
<svg class="a" style="left:17px;top:757px" width="15" height="16" viewBox="0 0 15 16">
<rect x="0.5" y="0.5" width="12" height="14" fill="#fff" stroke="#000"/>
<rect x="1" y="14" width="13" height="2" fill="#000"/><rect x="13" y="2" width="1.5" height="14" fill="#000"/>
<path d="M11 0h3v3z" fill="#0a7060"/>
<rect x="3" y="4" width="9" height="8" fill="#000"/><rect x="4" y="6" width="7" height="5" fill="#fff"/><rect x="3" y="4" width="9" height="1.5" fill="#2030c0"/>
<polyline points="5,10 7,8 9,9 11,7" fill="none" stroke="#e00"/><polyline points="5,8 7,7 9,7 11,9" fill="none" stroke="#0a0"/>
</svg>
<svg class="a" style="left:105px;top:757px" width="15" height="16" viewBox="0 0 15 16">
<rect x="0.5" y="0.5" width="12" height="14" fill="#fff" stroke="#000"/>
<rect x="1" y="14" width="13" height="2" fill="#000"/><rect x="13" y="2" width="1.5" height="14" fill="#000"/>
<path d="M11 0h3v3z" fill="#0a7060"/>
<rect x="3" y="4" width="9" height="8" fill="#000"/><rect x="4" y="6" width="7" height="5" fill="#fff"/><rect x="3" y="4" width="9" height="1.5" fill="#2030c0"/>
<polyline points="5,10 7,8 9,9 11,7" fill="none" stroke="#e00"/><polyline points="5,8 7,7 9,7 11,9" fill="none" stroke="#0a0"/>
</svg>
<span class="t p" style="left:36px;top:759.5px;color:#101030">3500T61.dyn</span>
<span class="t p" style="left:135.5px;top:759.5px;color:#101030">3500.dyn</span>
<div class="a" style="left:0px;top:780px;width:1280px;height:1px;background:#A8A6AC"></div>
<div class="a" style="left:0px;top:781px;width:1280px;height:2px;background:#fff"></div>
<div class="a" style="left:0px;top:783px;width:1280px;height:15px;background:#EEF0F5"></div>
<div class="a" style="left:0px;top:798px;width:1280px;height:1px;background:#0A2A10"></div>
<div class="a" style="left:0px;top:799px;width:1280px;height:1px;background:#3A6ED8"></div>
<div class="a" style="left:1215px;top:784px;width:1px;height:14px;background:#A0A0A8"></div>
<div class="a" style="left:1245px;top:784px;width:1px;height:14px;background:#A0A0A8"></div>
<div class="a" style="left:1278px;top:784px;width:1px;height:14px;background:#A0A0A8"></div>
<span class="t p" style="left:2px;top:785.8px;color:#101030">Ready</span>
</body></html>
